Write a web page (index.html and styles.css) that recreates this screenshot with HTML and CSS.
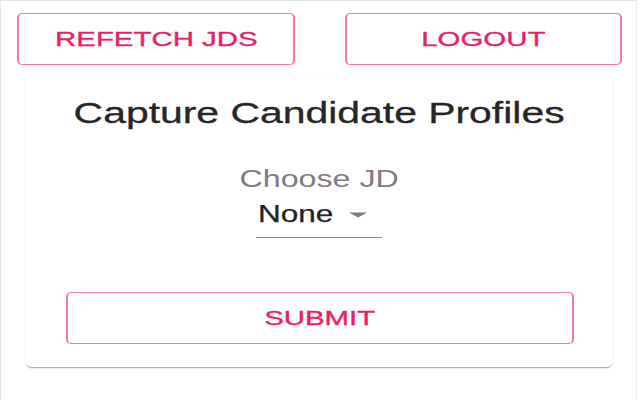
FILE: index.html
```html
<!DOCTYPE html>
<html lang="en">
<head>
<meta charset="utf-8">
<title>Capture Candidate Profiles</title>
<link rel="stylesheet" href="styles.css">
</head>
<body>
<div class="frame">
  <div class="top-row">
    <button class="btn btn-top"><span class="sx sx-btn">REFETCH JDS</span></button>
    <button class="btn btn-top btn-logout"><span class="sx sx-btn">LOGOUT</span></button>
  </div>
  <div class="card">
    <h1 class="title"><span class="sx sx-title">Capture Candidate Profiles</span></h1>
    <div class="field">
      <label class="label"><span class="sx">Choose JD</span></label>
      <div class="select">
        <span class="sx sx-left value">None</span>
        <svg class="arrow" width="18" height="6" viewBox="0 0 18 6"><polygon points="0,0.5 18,0.5 9,5.5" fill="#7a7a7a"/></svg>
      </div>
    </div>
    <button class="btn btn-submit"><span class="sx sx-btn">SUBMIT</span></button>
  </div>
</div>
</body>
</html>
```
FILE: styles.css
```css
html, body {
  margin: 0;
  padding: 0;
  background: #ffffff;
}
body {
  font-family: "Liberation Sans", Arial, sans-serif;
}
.frame {
  box-sizing: border-box;
  width: 637px;
  height: 400px;
  border-top: 1px solid #e2e2e2;
  border-left: 1px solid #e6e6e6;
  border-right: 1px solid #ececec;
  overflow: hidden;
}
.sx {
  display: inline-block;
  transform: scaleX(1.37);
  transform-origin: center;
  white-space: nowrap;
}
.sx-btn {
  transform: scaleX(1.4);
}
.sx-title {
  transform: scaleX(1.41);
}
.sx-left {
  transform-origin: left center;
}
.top-row {
  display: flex;
  gap: 50px;
  padding: 12px 0 0 16px;
}
.btn {
  box-sizing: border-box;
  display: flex;
  align-items: center;
  justify-content: center;
  background: #ffffff;
  color: #e91e63;
  border-style: solid;
  border-color: rgba(233, 30, 99, 0.6);
  border-width: 1.5px 2px;
  border-radius: 5px;
  font-family: "Liberation Sans", Arial, sans-serif;
  font-size: 21px;
  font-weight: 400;
  -webkit-text-stroke: 0.35px #e91e63;
  padding: 0;
  height: 52px;
  line-height: 24px;
}
.btn-top {
  width: 278px;
}
.btn-logout {
  width: 277px;
}
.card {
  box-sizing: border-box;
  margin: 11px 0 0 25px;
  width: 586px;
  height: 291px;
  background: #ffffff;
  border-radius: 5px;
  box-shadow: 0 2px 1px -1px rgba(0,0,0,0.2), 0 1px 1px 0 rgba(0,0,0,0.12), 0 1px 3px 0 rgba(0,0,0,0.1);
  padding-top: 20px;
  display: flex;
  flex-direction: column;
  align-items: center;
}
.title {
  margin: 0;
  font-size: 29px;
  line-height: 34px;
  font-weight: 400;
  color: #262626;
  -webkit-text-stroke: 0.3px #262626;
}
.field {
  margin-top: 35px;
  display: flex;
  flex-direction: column;
  align-items: center;
}
.label {
  font-size: 23.5px;
  line-height: 28px;
  color: #7d7d7d;
}
.select {
  box-sizing: border-box;
  margin-top: 7px;
  width: 126px;
  display: flex;
  align-items: center;
  padding: 0 15px 9px 2px;
  border-bottom: 1px solid #8c8c8c;
}
.value {
  font-size: 23px;
  line-height: 28px;
  color: #222222;
  -webkit-text-stroke: 0.25px #222222;
}
.arrow {
  margin-left: auto;
  margin-top: 2px;
}
.btn-submit {
  margin-top: 54px;
  width: 508px;
  margin-left: 2px;
}
```
